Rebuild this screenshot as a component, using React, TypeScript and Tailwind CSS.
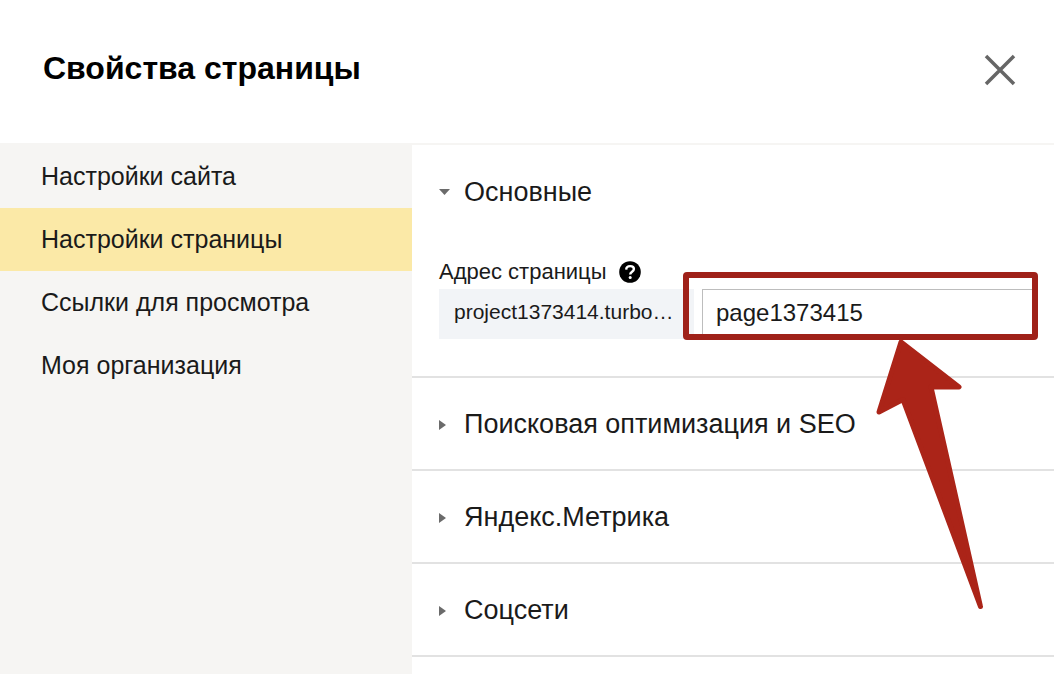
import { useState } from 'react'
import clsx from 'clsx'

const MENU = [
  'Настройки сайта',
  'Настройки страницы',
  'Ссылки для просмотра',
  'Моя организация'
]

const SECTIONS = ['Поисковая оптимизация и SEO', 'Яндекс.Метрика', 'Соцсети']

function Caret({ open = false }: { open?: boolean }) {
  return (
    <svg className="w-3 h-3 shrink-0" viewBox="0 0 12 12" fill="#6b6b6b" aria-hidden="true">
      {open ? <path d="M0 3h11L5.500 9z" /> : <path d="M0 2v10l7-5z" />}
    </svg>
  )
}

function HelpIcon() {
  return (
    <svg className="w-[22px] h-[22px]" viewBox="0 0 22 22" fill="none" aria-hidden="true">
      <circle cx="11" cy="11" r="10.800" fill="#000" />
      <path
        d="M7.200 8.600C7.300 6.200 8.900 5.100 11.200 5.100c2.300 0 3.700 1.200 3.700 2.900 0 2.700-3.700 2.700-3.700 5.400"
        stroke="#fff"
        strokeWidth="2.400"
      />
      <circle cx="11.200" cy="16.500" r="1.500" fill="#fff" />
    </svg>
  )
}

// Red frame around the address field with an arrow pointing at it
function Highlight() {
  return (
    <div className="absolute -left-[19px] -right-1 -top-[17px] -bottom-px border-[6px] border-[#9f2119] rounded-sm pointer-events-none">
      <svg
        className="absolute left-[184px] top-[59px] w-[114px] h-[276px]"
        viewBox="0 0 114 276"
        aria-hidden="true"
      >
        <path
          d="M28 5L86 50H58L107.500 269.500L30 62.500L6 75z"
          fill="#ab2418"
          stroke="#ab2418"
          strokeWidth="5"
          strokeLinejoin="round"
        />
      </svg>
    </div>
  )
}

export default function App() {
  const [active, setActive] = useState(1)
  const [address, setAddress] = useState('page1373415')

  return (
    <div className="min-h-screen flex flex-col bg-white text-[#1a1a1a] font-['Liberation_Sans',Arial,sans-serif] overflow-hidden">
      <header className="h-[145px] shrink-0 flex items-start justify-between pl-[43px] pr-[38px] pt-12 border-b-2 border-[#f6f5f3]">
        <h1 className="text-[32px] leading-10 font-bold text-black">Свойства страницы</h1>
        <button type="button" aria-label="Закрыть" className="mt-[6px]">
          <svg className="w-8 h-8" viewBox="0 0 32 32" stroke="#666" strokeWidth="3.500" aria-hidden="true">
            <path d="M2 2l28 28M30 2L2 30" />
          </svg>
        </button>
      </header>

      <div className="flex flex-1">
        <nav className="w-[412px] shrink-0 bg-[#f6f5f3]">
          {MENU.map((item, i) => (
            <button
              key={item}
              type="button"
              onClick={() => setActive(i)}
              className={clsx(
                'block w-full h-[63px] pl-[41px] pb-[2px] text-left text-[25px] leading-8',
                i === active && 'bg-[#fbe9a7]'
              )}
            >
              {item}
            </button>
          ))}
        </nav>

        <main className="flex-1 min-w-0">
          <section className="h-[231px] pl-[27px] pr-5">
            <button type="button" className="flex items-center gap-[13px] h-[93px] text-[27px] leading-8">
              <Caret open />
              Основные
            </button>
            <div className="flex items-center gap-3 h-8 mt-[18px]">
              <label htmlFor="address" className="text-[22px] leading-8">
                Адрес страницы
              </label>
              <button type="button" aria-label="Справка">
                <HelpIcon />
              </button>
            </div>
            <div className="flex gap-2 mt-px">
              <div className="w-[255px] h-[50px] shrink-0 pl-[15px] bg-[#f2f4f7] text-[21px] leading-[46px] whitespace-nowrap">
                project1373414.turbo…
              </div>
              <div className="relative flex-1">
                <input
                  id="address"
                  type="text"
                  value={address}
                  onChange={(e) => setAddress(e.target.value)}
                  className="w-full h-[50px] px-[13px] pb-[2px] border border-[#bdbdbd] bg-white text-[24px] outline-none"
                />
                <Highlight />
              </div>
            </div>
          </section>

          {SECTIONS.map((title) => (
            <section key={title} className="border-t-2 border-[#e2e2e2]">
              <button type="button" className="flex items-center gap-[13px] w-full h-[91px] pl-[27px] text-left text-[27px] leading-8">
                <Caret />
                {title}
              </button>
            </section>
          ))}
          <div className="border-t-2 border-[#e2e2e2]" />
        </main>
      </div>
    </div>
  )
}
